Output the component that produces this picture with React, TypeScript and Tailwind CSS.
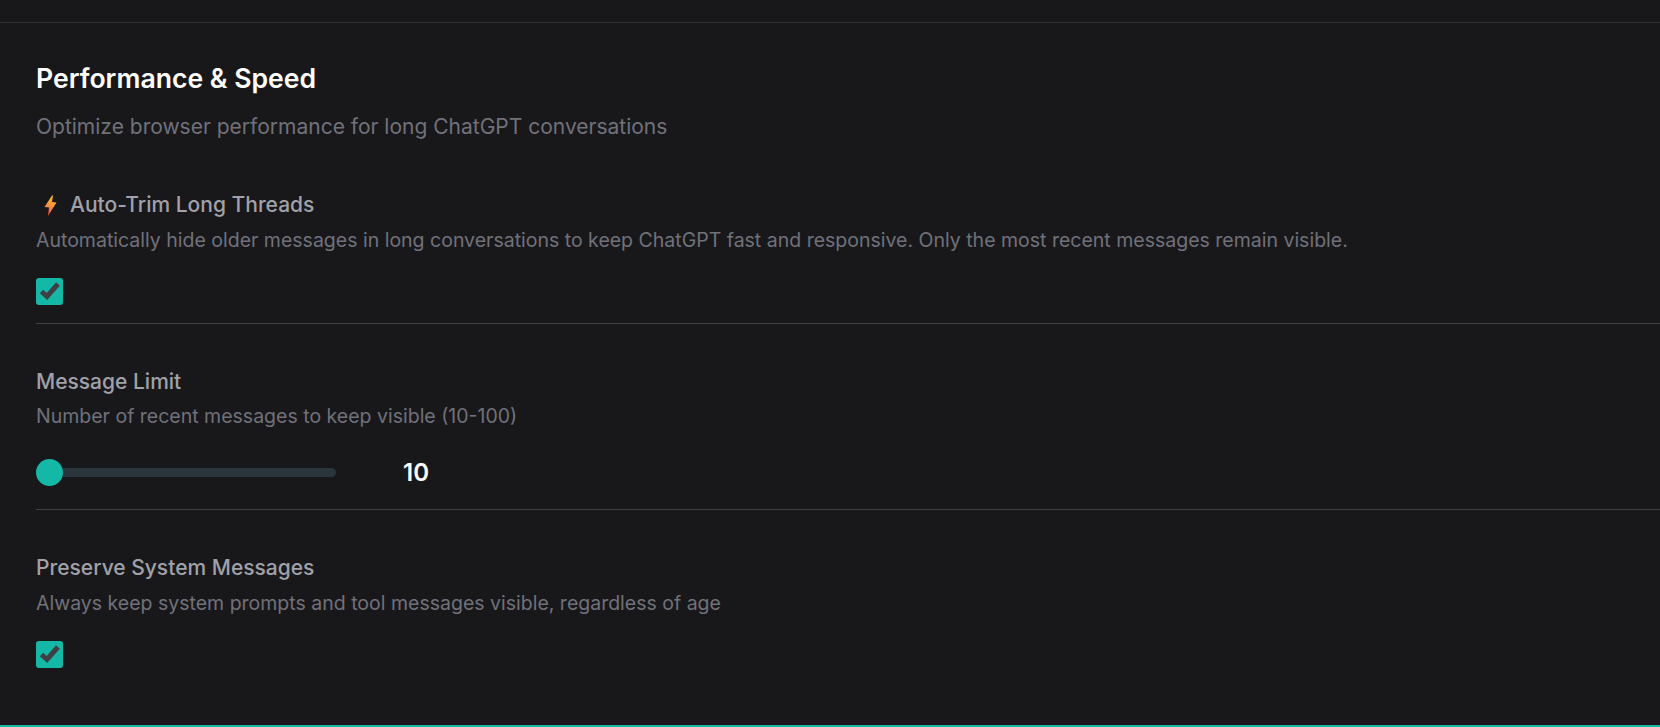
import React from "react";

function Check() {
  return (
    <div className="w-[27px] h-[27px] rounded-[3px] bg-[#14b8a6]">
      <svg width="27" height="27" viewBox="0 0 27 27" fill="none">
        <path d="M5.5 13.5 L11 18.5 L22 6" stroke="#3f3f46" strokeWidth="5" />
      </svg>
    </div>
  );
}

function Bolt() {
  return (
    <svg width="14" height="22" viewBox="0 0 14 22">
      <defs>
        <linearGradient id="bolt" x1="0.6" y1="0" x2="0.4" y2="1">
          <stop offset="0%" stopColor="#fbbf24" />
          <stop offset="50%" stopColor="#fb923c" />
          <stop offset="100%" stopColor="#ef4444" />
        </linearGradient>
      </defs>
      <path d="M9 1.5 L1.5 13 L6 13.5 L5 22 L13.5 8.5 L9 8 L10 1.5 Z" fill="url(#bolt)" />
    </svg>
  );
}

export default function App() {
  return (
    <div className="h-[727px] bg-[#18181b] overflow-hidden flex flex-col font-['Inter',sans-serif]">
      <div className="h-[23px] shrink-0 border-b border-[#2a3036]" />
      <div className="flex-1 pl-9">
        <h2 className="mt-[39px] text-[26.6px] leading-[32px] font-semibold text-white">Performance &amp; Speed</h2>
        <p className="mt-[17px] text-[21px] leading-[32px] text-[#71717a]">
          Optimize browser performance for long ChatGPT conversations
        </p>

        <div className="mt-[48px] border-b border-[#3f3f46] pb-[18px]">
          <div className="flex items-center h-[28px] text-[21px] font-medium text-[#a1a1aa]">
            <span className="ml-[7px] mr-[13px] flex"><Bolt /></span>
            Auto-Trim Long Threads
          </div>
          <p className="mt-[7px] text-[19.5px] leading-[28px] text-[#71717a]">
            Automatically hide older messages in long conversations to keep ChatGPT fast and responsive. Only the most recent messages remain visible.
          </p>
          <div className="mt-[24px]"><Check /></div>
        </div>

        <div className="mt-[44px] border-b border-[#3f3f46] pb-[23px]">
          <div className="h-[28px] flex items-center text-[21px] font-medium text-[#a1a1aa]">Message Limit</div>
          <p className="mt-[6px] text-[19.5px] leading-[28px] text-[#71717a]">
            Number of recent messages to keep visible (10-100)
          </p>
          <div className="mt-[28px] flex items-center h-[28px]">
            <div className="relative w-[300px] h-[9px] rounded-full bg-[#2a363e]">
              <div className="absolute left-0 top-[-9px] w-[27px] h-[27px] rounded-full bg-[#14b8a6]" />
            </div>
            <span className="ml-[67px] mt-[2px] text-[24px] font-semibold text-white">10</span>
          </div>
        </div>

        <div className="mt-[44px]">
          <div className="h-[28px] flex items-center text-[21px] font-medium text-[#a1a1aa]">Preserve System Messages</div>
          <p className="mt-[7px] text-[19.5px] leading-[28px] text-[#71717a]">
            Always keep system prompts and tool messages visible, regardless of age
          </p>
          <div className="mt-[24px]"><Check /></div>
        </div>
      </div>
      <div className="h-[2px] shrink-0 bg-[#14b8a6]" />
    </div>
  );
}
